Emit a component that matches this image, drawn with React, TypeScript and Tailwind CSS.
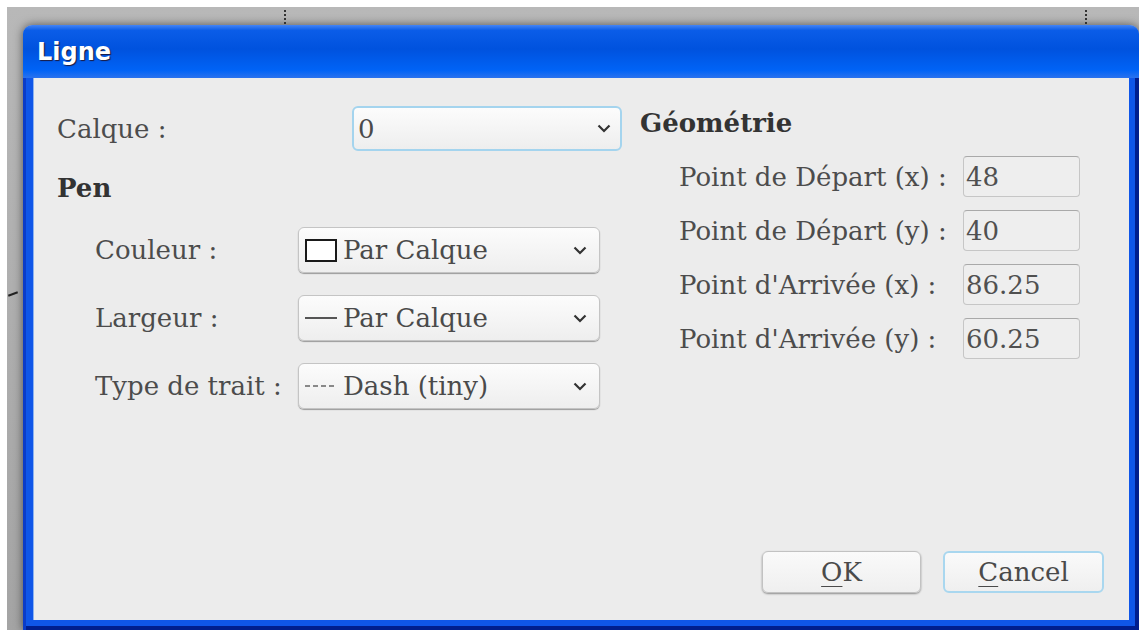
import type { ReactNode } from "react";

const serif = "font-['DejaVu_Serif','Liberation_Serif',serif]";

function Chevron() {
  return (
    <svg width="14" height="9" viewBox="0 0 14 9" className="shrink-0">
      <path d="M1.5 1.5l5.5 5.5 5.5-5.5" fill="none" stroke="#333" strokeWidth="2.2" />
    </svg>
  );
}

function Combo({
  children,
  focused,
  className,
}: {
  children: ReactNode;
  focused?: boolean;
  className: string;
}) {
  return (
    <div
      className={`flex items-center rounded-[6px] bg-gradient-to-b from-[#fcfcfc] to-[#eeeeee] ${
        focused
          ? "border-2 border-[#a4d4ee] pl-[4px] pr-[9px]"
          : "border border-[#c4c4c4] pl-[6px] pr-[12px] shadow-[0_1px_1px_rgba(0,0,0,0.35)]"
      } ${className}`}
    >
      <div className="flex flex-1 items-center gap-[6px] text-[#4a4a4a]">{children}</div>
      <Chevron />
    </div>
  );
}

function Field({ value }: { value: string }) {
  return (
    <div className="flex h-[41px] w-[117px] items-center rounded-[4px] border border-[#c6c6c6] border-t-[#a9a9a9] bg-[#eeeeee] pl-[2px] text-[#505050]">
      {value}
    </div>
  );
}

function Button({ label, focused }: { label: string; focused?: boolean }) {
  return (
    <button
      className={`flex h-[42px] items-center justify-center rounded-[6px] bg-gradient-to-b from-[#fafafa] to-[#efefef] text-[#4a4a4a] ${
        focused
          ? "w-[161px] border-2 border-[#a9d7ef]"
          : "w-[159px] border border-[#c2c2c2] shadow-[0_1px_2px_rgba(0,0,0,0.4)]"
      }`}
    >
      <span className="underline decoration-1 underline-offset-[5px] [text-decoration-skip-ink:none]">
        {label[0]}
      </span>
      {label.slice(1)}
    </button>
  );
}

export default function App() {
  const penRows: { label: string; preview: ReactNode; text: string }[] = [
    {
      label: "Couleur :",
      preview: <div className="h-[23px] w-[32px] shrink-0 border-2 border-[#1a1a1a] bg-white" />,
      text: "Par Calque",
    },
    {
      label: "Largeur :",
      preview: <div className="h-[2px] w-[32px] shrink-0 bg-[#555]" />,
      text: "Par Calque",
    },
    {
      label: "Type de trait :",
      preview: (
        <svg width="32" height="4" viewBox="0 0 32 4" className="shrink-0">
          <path d="M0 2h32" stroke="#666" strokeWidth="1.5" strokeDasharray="5 3" />
        </svg>
      ),
      text: "Dash (tiny)",
    },
  ];

  const geometry = [
    { label: "Point de Départ (x) :", value: "48" },
    { label: "Point de Départ (y) :", value: "40" },
    { label: "Point d'Arrivée (x) :", value: "86.25" },
    { label: "Point d'Arrivée (y) :", value: "60.25" },
  ];

  return (
    <div className="relative h-[630px] w-[1139px] overflow-hidden bg-white">
      {/* desktop behind the dialog */}
      <div className="ml-[7px] mt-[7px] h-[623px] bg-gradient-to-b from-[#b8b8b8] to-[#a4a4a4] pl-[16px] pt-[18px]">
        {/* dialog window */}
        <div className="flex h-[605px] w-[1116px] flex-col overflow-hidden rounded-tl-[9px] rounded-tr-[9px] shadow-[0_0_10px_rgba(0,0,0,0.55)]">
          <div className="flex h-[53px] shrink-0 items-center bg-[linear-gradient(to_bottom,#4585f5_0%,#0b5de8_10%,#0052de_45%,#0063f6_85%,#2a72ee_100%)] pl-[14px] font-['DejaVu_Sans',sans-serif] text-[24px] font-bold text-white [text-shadow:1px_1px_1px_#1a1a40]">
            Ligne
          </div>

          <div className="flex flex-1 bg-[#0f56e8] px-[10px] pb-[10px] shadow-[inset_3px_0_0_#0a3cc8,inset_-4px_0_0_#001e8e,inset_0_-4px_0_#001e8e]">
            <div
              className={`relative flex flex-1 flex-col border-l border-[#8cb2ef] bg-[#ececec] text-[26px] leading-[30px] text-[#4c4c4c] ${serif}`}
            >
              <div className="flex">
                {/* left column: layer and pen */}
                <div className="w-[588px] pl-[23px]">
                  <div className="mt-[28px] flex items-center">
                    <div className="w-[295px]">Calque :</div>
                    <Combo focused className="h-[45px] w-[270px]">
                      0
                    </Combo>
                  </div>
                  <div className="mt-[22px] font-bold text-[#333]">Pen</div>
                  <div className="mt-[24px] flex flex-col gap-[22px] pl-[38px]">
                    {penRows.map((r) => (
                      <div key={r.label} className="flex items-center">
                        <div className="w-[203px]">{r.label}</div>
                        <Combo className="h-[46px] w-[302px]">
                          {r.preview}
                          <span>{r.text}</span>
                        </Combo>
                      </div>
                    ))}
                  </div>
                </div>

                {/* right column: geometry */}
                <div className="ml-[18px] flex-1">
                  <div className="mt-[30px] font-bold text-[#333]">Géométrie</div>
                  <div className="mt-[18px] flex flex-col gap-[13px] pl-[39px]">
                    {geometry.map((g) => (
                      <div key={g.label} className="flex items-center">
                        <div className="w-[284px]">{g.label}</div>
                        <Field value={g.value} />
                      </div>
                    ))}
                  </div>
                </div>
              </div>

              <div className="mt-auto flex justify-end gap-[22px] pb-[27px] pr-[25px]">
                <Button label="OK" />
                <Button label="Cancel" focused />
              </div>
            </div>
          </div>
        </div>
      </div>

      {/* bits of the drawing peeking out behind the dialog */}
      <div className="absolute left-[284px] top-[10px] h-[14px] border-l-2 border-dotted border-[#333]" />
      <div className="absolute left-[1085px] top-[10px] h-[14px] border-l-2 border-dotted border-[#333]" />
      <div className="absolute left-[8px] top-[293px] h-[2px] w-[10px] -rotate-[20deg] bg-[#222]" />
    </div>
  );
}
